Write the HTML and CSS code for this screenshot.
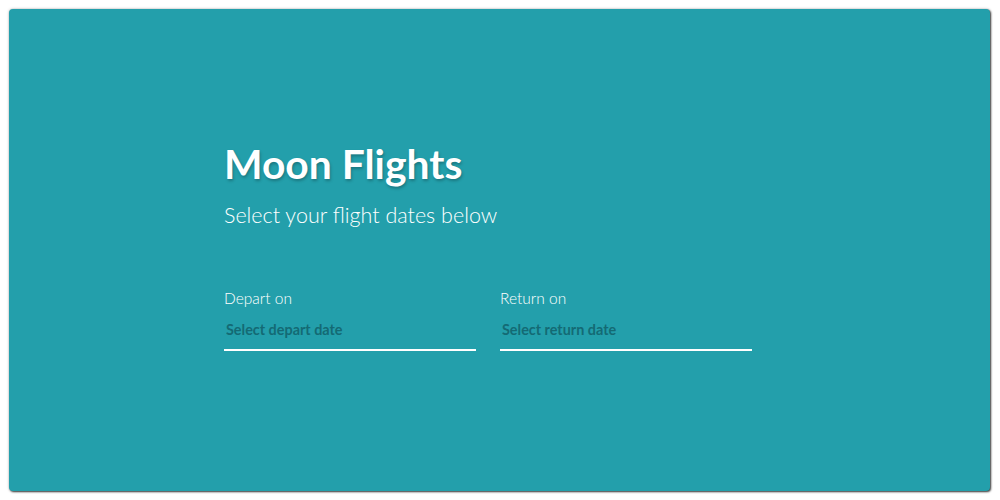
FILE: index.html
```html
<!DOCTYPE html>
<html lang="en">
<head>
    <meta charset="UTF-8">
    <meta name="viewport" content="width=device-width, initial-scale=1.0">
    <title>Moon Flights</title>
    <link rel="stylesheet" href="styles.css">
</head>
<body>
    <div class="card">
        <div class="content">
            <h1>Moon Flights</h1>
            <p class="subtitle">Select your flight dates below</p>
            <form class="dates">
                <label class="field">
                    <span class="field-label">Depart on</span>
                    <input type="text" name="depart" placeholder="Select depart date">
                </label>
                <label class="field">
                    <span class="field-label">Return on</span>
                    <input type="text" name="return" placeholder="Select return date">
                </label>
            </form>
        </div>
    </div>
</body>
</html>
```

FILE: styles.css
```css
* {
    box-sizing: border-box;
}

body {
    margin: 0;
    padding: 9px 10px 9px 9px;
    height: 500px;
    font-family: Lato, "Open Sans", sans-serif;
    background: #fff;
    overflow: hidden;
}

.card {
    height: 100%;
    background: #239fab;
    border-radius: 4px;
    box-shadow: 1px 1px 2px rgba(0, 0, 0, 0.75), 0 0 3px rgba(0, 0, 0, 0.25);
    padding: 131px 0 0 215px;
    color: #fff;
}

h1 {
    margin: 0;
    font-size: 40.8px;
    font-weight: 700;
    line-height: 48px;
    text-shadow: 1px 2px 3px rgba(0, 0, 0, 0.25);
}

.subtitle {
    margin: 13px 0 0;
    font-size: 21.5px;
    font-weight: 300;
    line-height: 28px;
}

.dates {
    display: flex;
    gap: 24px;
    margin-top: 59px;
}

.field {
    display: flex;
    flex-direction: column;
    width: 252px;
}

.field-label {
    font-size: 15.5px;
    font-weight: 300;
    line-height: 20px;
}

.field input {
    background: transparent;
    border: none;
    border-bottom: 2px solid #fff;
    border-radius: 0;
    padding: 13px 2px 11px;
    font-family: inherit;
    font-size: 14.4px;
    font-weight: 700;
    color: #fff;
    outline: none;
}

.field input::placeholder {
    color: #146a74;
    opacity: 1;
}
```
